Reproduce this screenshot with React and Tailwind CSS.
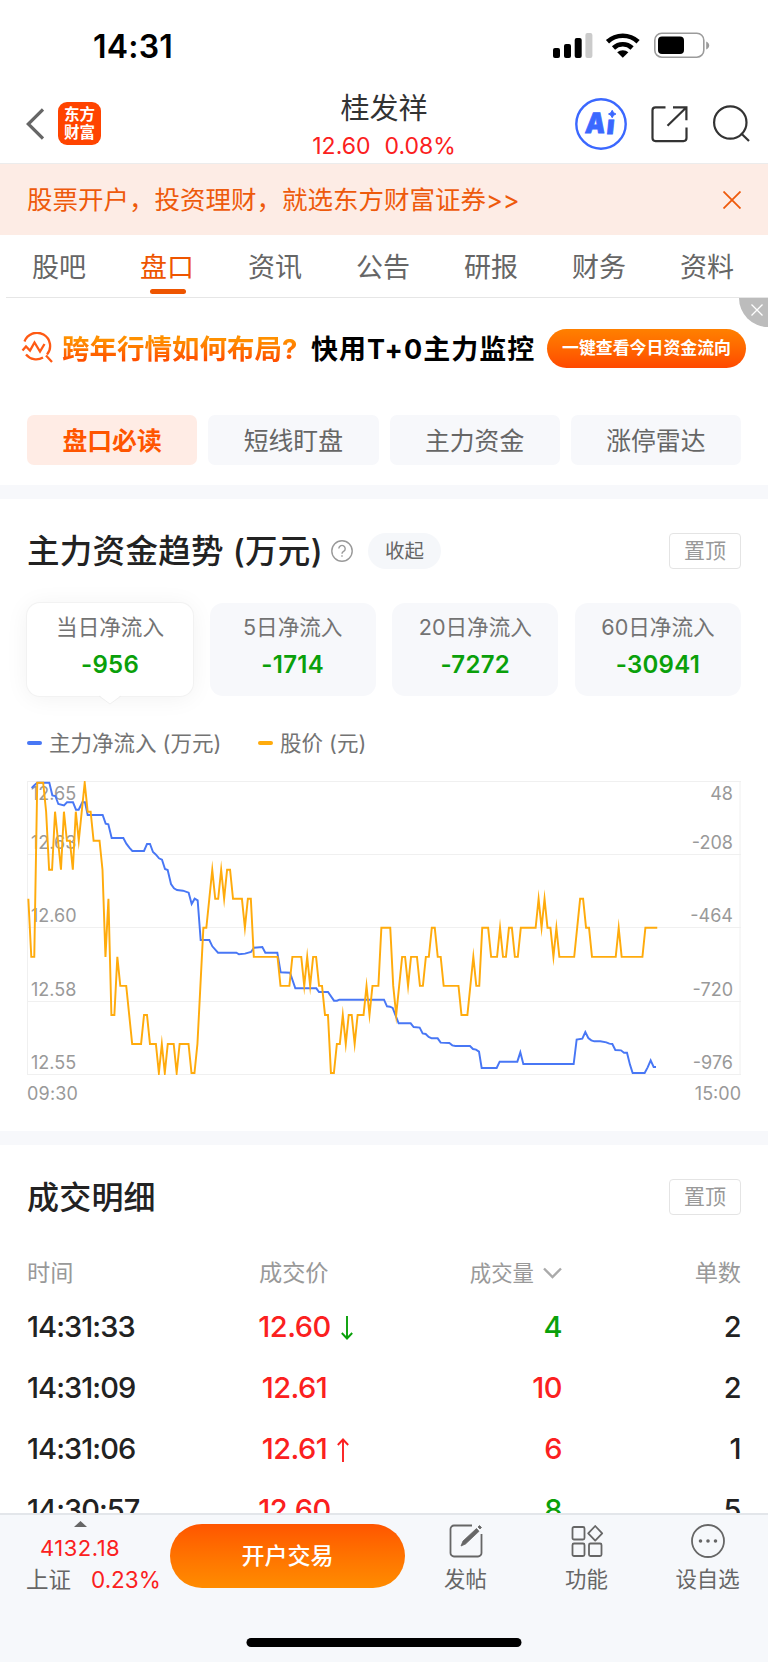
import React from 'react';

const tabs = ['股吧', '盘口', '资讯', '公告', '研报', '财务', '资料'];
const subTabs = ['盘口必读', '短线盯盘', '主力资金', '涨停雷达'];

const flows = [
    { label: '当日净流入', value: '-956', active: true },
    { label: '5日净流入', value: '-1714' },
    { label: '20日净流入', value: '-7272' },
    { label: '60日净流入', value: '-30941' },
];

const trades = [
    { time: '14:31:33', price: '12.60', dir: 'down', volume: '4', buy: false, count: '2' },
    { time: '14:31:09', price: '12.61', dir: null, volume: '10', buy: true, count: '2' },
    { time: '14:31:06', price: '12.61', dir: 'up', volume: '6', buy: true, count: '1' },
    { time: '14:30:57', price: '12.60', dir: null, volume: '8', buy: false, count: '5' },
];

// Price per minute as "cents x minutes", 12.55 - 12.65
const priceRuns =
    '61 59x2 65x3 64 62x2 64 63 62 64 63x2 62 64 63 64 65 64x2 63x3 62 59 61 57x2 59 58x3 57 56x4 57x2 56x3 55 56 55 56x3 55 56x4 55x2 56 58 60x2 61 62 61x2 62 61 62x2 61x4 60 61x2 59x9 58x4 59x4 58 59 58 59x2 58x2 57x2 55x2 56x2 57 56 57x2 56 57x3 58 57 58x3 60x4 58 57 58 59x2 58 59x3 58x2 59x2 60x2 59x2 58x6 57x3 58 59 58x2 60x3 59x3 60 59x2 60x2 59x2 60x6 61 60 61 60x2 59 60 59x6 60 61x2 60x2 59x9 60 59x8 60x5';

const pricePoints = priceRuns
    .split(' ')
    .flatMap((run) => {
        const [cents, n] = run.split('x');
        return Array(Number(n || 1)).fill(Number(cents));
    })
    .map((cents, i) => `${(85 + i * 8.9).toFixed(1)},${(38 + (65 - cents) * 87.1).toFixed(1)}`)
    .join(' ');

const flowPoints =
    '95,54 104,45 112,38 148,38 157,76 166,78 175,102 192,106 201,97 219,97 228,119 236,119 247,97 255,97 263,135 308,135 317,161 325,163 335,204 370,204 379,221 388,233 397,243 432,243 441,222 450,222 459,246 468,254 477,265 486,269 495,297 503,300 513,342 522,355 531,360 549,362 566,368 575,402 584,386 593,391 602,510 628,510 637,529 654,548 709,548 717,553 735,551 753,546 762,533 787,531 796,548 832,548 842,607 870,608 886,655 949,655 957,666 984,666 1002,692 1011,692 1018,689 1152,689 1161,709 1170,710 1178,714 1196,760 1232,760 1241,771 1259,773 1268,790 1277,792 1286,801 1295,805 1313,805 1322,818 1348,819 1357,826 1366,828 1410,828 1419,837 1428,839 1437,845 1445,894 1490,894 1499,875 1552,875 1561,847 1570,882 1721,882 1730,809 1747,806 1756,786 1765,804 1774,811 1783,814 1801,814 1819,817 1828,821 1837,822 1846,840 1863,841 1872,848 1881,848 1890,884 1898,909 1934,909 1943,892 1952,871 1961,891 1968,891';

const gridLines = [11.5, 84.5, 157.5, 231.5, 304.5];
const leftAxis = [['12.65', 30], ['12.63', 78.5], ['12.60', 152], ['12.58', 225.5], ['12.55', 299]];
const rightAxis = [['48', 30], ['-208', 78.5], ['-464', 152], ['-720', 225.5], ['-976', 299]];

function StatusBar() {
    return (
        <div className="flex h-[76px] shrink-0 items-start justify-between pl-[93px] pr-[58px] text-black">
            <span className="mt-[27px] text-[32px] font-semibold leading-[40px] tracking-[0.2px]">14:31</span>
            <svg className="mt-[30px]" width="158" height="32" viewBox="552 30 158 32">
                <rect x="553" y="48" width="7" height="10" rx="2" />
                <rect x="564" y="44" width="7" height="14" rx="2" />
                <rect x="574.7" y="38" width="7" height="20" rx="2" />
                <rect x="585.4" y="33" width="7" height="25" rx="2" fill="#cbcbcb" />
                <g fill="none" stroke="#000" strokeWidth="4.6">
                    <path d="M607.5 41.8a22.5 22.5 0 0 1 30.6 0" />
                    <path d="M613.5 48a13.6 13.6 0 0 1 18.6 0" />
                </g>
                <path d="M617.2 52.3a8.4 8.4 0 0 1 11.2 0l-5.6 5.4z" />
                <rect x="654.8" y="33.2" width="49" height="24" rx="7" fill="none" stroke="#9b9b9b" strokeWidth="1.6" />
                <rect x="658" y="36.6" width="26" height="17.4" rx="4" />
                <path d="M706.2 41.5c4 1.500 4 6.500 0 8z" fill="#9b9b9b" />
            </svg>
        </div>
    );
}

function Header() {
    return (
        <header className="flex h-[88px] shrink-0 items-start justify-between border-b border-[#ececec] pl-[25px] pr-[17px]">
            <div className="flex w-[217px] items-center gap-[14px] pt-[26px]">
                <svg width="19" height="32" viewBox="0 0 19 32" fill="none" stroke="#666" strokeWidth="3.200">
                    <path d="M18 1.500 3.300 16 18 30.500" />
                </svg>
                <div className="flex h-[43px] w-[43px] flex-col items-center justify-center rounded-[9px] bg-[#ff4400] text-[15.500px] font-bold leading-[17.500px] text-white">
                    <span>东方</span>
                    <span>财富</span>
                </div>
            </div>
            <div className="flex flex-col items-center pt-[14px]">
                <span className="text-[29px] leading-[38px] text-[#333]">桂发祥</span>
                <div className="flex gap-[14px] text-[23px] leading-[36px] text-[#fb2020]">
                    <span>12.60</span>
                    <span>0.08%</span>
                </div>
            </div>
            <div className="flex w-[225px] justify-end pt-[20px]">
                <svg width="176" height="56" viewBox="575 96 176 56" fill="none" stroke="#333" strokeWidth="2.200">
                    <circle cx="601" cy="124" r="24.700" stroke="#3b68ff" strokeWidth="2.400" />
                    <g fontWeight="900" fill="#3b68ff" stroke="#3b68ff" strokeWidth="0.800">
                        <text transform="translate(584.500 133) skewX(-6) scale(0.9 1)" fontSize="28">A</text>
                        <text transform="translate(606 133.500) skewX(-6)" fontSize="26">ı</text>
                    </g>
                    <path d="M612.200 110.300 Q613 113.200 615.900 114 Q613 114.800 612.200 117.700 Q611.400 114.800 608.500 114 Q611.400 113.200 612.200 110.300z" fill="#3b68ff" stroke="#3b68ff" strokeWidth="1" />
                    <path d="M665.500 107.300h-10a3 3 0 0 0-3 3v27.800a3 3 0 0 0 3 3h28a3 3 0 0 0 3-3v-10.500M673 107.300h13.400v13M686 107.700 667.500 125.800" />
                    <circle cx="730.300" cy="122.500" r="16.200" />
                    <path d="M741 133.300 749 141" />
                </svg>
            </div>
        </header>
    );
}

function PromoBanner() {
    return (
        <div className="flex h-[71px] shrink-0 items-center justify-between bg-[#fdece5] pl-[27px] pr-[27px] text-[#ee5a0c]">
            <span className="text-[25.500px] leading-[36px]">股票开户，投资理财，就选东方财富证券&gt;&gt;</span>
            <svg width="18" height="18" viewBox="0 0 18 18" stroke="currentColor" strokeWidth="1.800">
                <path d="M.5.5l17 17M17.500.5l-17 17" />
            </svg>
        </div>
    );
}

function TabBar() {
    return (
        <nav className="ml-[6px] flex h-[63px] shrink-0 border-b border-[#e6e6e6] pr-[6px]">
            {tabs.map((tab) => {
                const isActive = tab === '盘口';
                return (
                    <div key={tab} className={`relative flex-1 pr-[2px] pt-[14px] text-center text-[27px] leading-[38px] ${isActive ? 'text-[#ee5500]' : 'text-[#666]'}`}>
                        {tab}
                        {isActive && <span className="absolute bottom-[3px] left-1/2 h-[5px] w-[36px] -translate-x-1/2 rounded-full bg-[#ee5500]" />}
                    </div>
                );
            })}
        </nav>
    );
}

function AdStrip() {
    return (
        <div className="relative flex h-[117px] shrink-0 items-start pl-[21px] pt-[31px]">
            <svg className="mt-[3px]" width="32" height="32" viewBox="0 0 32 32" fill="none" stroke="#ff5a14" strokeWidth="2.300">
                <path d="M3.500 9.500A13.200 13.200 0 1 1 26 22.500M5 22.500a13.200 13.200 0 0 0 17 3M25 23.500l6 6.500" />
                <path d="M1.500 18.500 5 14.500l4 4 4.500-8 5.500 9 4.500-7.500" />
            </svg>
            <span className="ml-[9px] mt-px w-[249px] whitespace-nowrap bg-gradient-to-b from-[#ff9000] from-25% to-[#ff5000] to-75% bg-clip-text text-[27.500px] font-bold leading-[39px] text-transparent">
                跨年行情如何布局?
            </span>
            <span className="mt-px w-[225px] whitespace-nowrap text-[27px] font-bold leading-[39px] tracking-[1px] text-black">快用T+0主力监控</span>
            <span className="ml-[11px] h-[39px] w-[199px] rounded-full bg-gradient-to-b from-[#ff8000] to-[#ff4800] text-center text-[16.900px] font-bold leading-[39px] text-white">
                一键查看今日资金流向
            </span>
            <div className="absolute right-0 top-0 flex h-[29px] w-[29px] items-center justify-center rounded-bl-full bg-[#bcbcbc] pb-[6px] pl-[7px]">
                <svg width="12" height="12" viewBox="0 0 12 12" stroke="#fff" strokeWidth="1.300">
                    <path d="M.5.5l11 11M11.500.5l-11 11" />
                </svg>
            </div>
        </div>
    );
}

function PinButton() {
    return <button className="h-[36px] w-[72px] rounded-[4px] border border-[#e4e4e4] text-[21px] leading-[34px] text-[#999]">置顶</button>;
}

function FlowChart() {
    return (
        <svg className="shrink-0" width="768" height="361" viewBox="0 0 768 361">
            <clipPath id="plot">
                <rect x="27" y="11" width="714" height="294" />
            </clipPath>
            <g stroke="#f0f0f0" strokeWidth="1">
                {gridLines.map((y) => (
                    <path key={y} d={`M27 ${y}H741`} />
                ))}
                <path d="M27.500 11V305M740 11V305" />
            </g>
            <g fontSize="18" fill="#999">
                {leftAxis.map(([text, y]) => (
                    <text key={text} x="31" y={y}>{text}</text>
                ))}
                {rightAxis.map(([text, y]) => (
                    <text key={text} x="733" y={y} textAnchor="end">{text}</text>
                ))}
                <text x="27" y="329.500" letterSpacing="0.200">09:30</text>
                <text x="741" y="329.500" textAnchor="end">15:00</text>
            </g>
            <g clipPath="url(#plot)">
                <g transform="scale(0.33333)" fill="none" strokeWidth="5.800" strokeMiterlimit="10">
                    <polyline points={flowPoints} stroke="#4877f5" />
                    <polyline points={pricePoints} stroke="#ffab0c" />
                </g>
            </g>
        </svg>
    );
}

function FundTrend() {
    return (
        <section className="flex shrink-0 flex-col">
            <div className="flex items-center px-[27px] pt-[34px]">
                <h2 className="whitespace-nowrap pt-[2px] text-[32.500px] font-medium leading-[34px] tracking-[0.300px] text-[#222]">主力资金趋势 (万元)</h2>
                <svg className="ml-[8px]" width="22" height="22" viewBox="0 0 22 22" fill="none" stroke="#999" strokeWidth="1.400">
                    <circle cx="11" cy="11" r="10.200" />
                    <path d="M7.800 8.600a3.200 3.200 0 1 1 4.800 2.800c-1.100.7-1.600 1.200-1.600 2.400M11 15.200v1.600" />
                </svg>
                <span className="ml-[15px] h-[36px] w-[73px] rounded-full bg-[#f5f7fa] text-center text-[19.500px] leading-[36px] text-[#666]">收起</span>
                <div className="ml-auto">
                    <PinButton />
                </div>
            </div>
            <div className="mt-[34px] grid grid-cols-4 gap-[16.500px] px-[27px]">
                {flows.map((item) => (
                    <div
                        key={item.label}
                        className={`relative flex h-[93px] flex-col items-center rounded-[13px] pt-[8px] ${item.active ? 'bg-white shadow-[0_0_0_1px_#f2f2f2,0_2px_24px_rgba(0,0,0,0.06)]' : 'bg-[#f7f8fb]'}`}
                    >
                        <span className="text-[21.600px] leading-[32px] text-[#737373]">{item.label}</span>
                        <span className="mt-[7px] text-[24px] font-semibold leading-[30px] tracking-[0.300px] text-[#0aa00a]">{item.value}</span>
                        {item.active && (
                            <svg className="absolute -bottom-[9px] left-1/2 -translate-x-1/2" width="22" height="11" viewBox="0 0 22 11">
                                <path d="M0 0h22v1L11 10 0 1z" fill="#fff" />
                                <path d="M0 2l11 8 11-8" fill="none" stroke="#ececec" strokeWidth="0.800" />
                            </svg>
                        )}
                    </div>
                ))}
            </div>
            <div className="flex h-[74px] items-center px-[27px] pt-[20px] text-[21.500px] leading-[32px] text-[#737373]">
                <span className="mr-[7px] h-[4px] w-[15px] rounded-full bg-[#4877f5]" />
                <span className="w-[209px]">主力净流入 (万元)</span>
                <span className="mr-[7px] h-[4px] w-[15px] rounded-full bg-[#ffab0c]" />
                <span>股价 (元)</span>
            </div>
            <FlowChart />
        </section>
    );
}

function TradeArrow({ dir }) {
    return (
        <svg className="absolute left-full top-[8px] ml-[10px]" width="12" height="26" viewBox="0 0 12 26" fill="none" stroke={dir === 'up' ? '#fb2020' : '#0aa00a'} strokeWidth="1.900">
            {dir === 'up' ? <path d="M6 25V2.500M.8 8 6 2.500 11.200 8" /> : <path d="M6 1v22.500M.8 18 6 23.500 11.200 18" />}
        </svg>
    );
}

function TradeDetails() {
    return (
        <section className="shrink-0 px-[27px]">
            <div className="flex items-center justify-between pt-[34px]">
                <h2 className="pt-[2px] text-[32px] font-medium leading-[34px] tracking-[0.200px] text-[#222]">成交明细</h2>
                <PinButton />
            </div>
            <div className="mt-[42px] flex h-[32px] items-center text-[23.200px] leading-[32px] text-[#999]">
                <span className="w-[232px]">时间</span>
                <span className="w-[71px] whitespace-nowrap">成交价</span>
                <span className="flex w-[232px] items-center justify-end text-[21.400px]">
                    成交量
                    <svg className="ml-[9px]" width="19" height="12" viewBox="0 0 19 12" fill="none" stroke="#aaa" strokeWidth="2.400">
                        <path d="M1 1.500l8.500 8.500L18 1.500" />
                    </svg>
                </span>
                <span className="flex-1 text-right">单数</span>
            </div>
            <div className="pt-[7px]">
                {trades.map((row) => (
                    <div key={row.time} className="flex h-[61px] items-center text-[29px] font-medium leading-[40px] tracking-[-0.500px] text-[#222]">
                        <span className="w-[232px] tracking-[-0.950px]">{row.time}</span>
                        <span className="flex w-[71px] justify-center text-[#fb2020]">
                            <span className="relative">
                                {row.price}
                                {row.dir && <TradeArrow dir={row.dir} />}
                            </span>
                        </span>
                        <span className={`w-[232px] text-right ${row.buy ? 'text-[#fb2020]' : 'text-[#0aa00a]'}`}>{row.volume}</span>
                        <span className="flex-1 text-right">{row.count}</span>
                    </div>
                ))}
            </div>
        </section>
    );
}

const actions = [
    {
        label: '发帖',
        icon: (
            <>
                <path d="M23 1.500H5a3.500 3.500 0 0 0-3.500 3.500v24A3.500 3.500 0 0 0 5 32.500h24a3.500 3.500 0 0 0 3.500-3.500V10" />
                <path d="M12 22l2-5L27.500 4.500l2.500 2.800L16.500 20zM29 3l1.500-1.500 2 2L31 5z" fill="currentColor" strokeWidth="0.800" />
            </>
        ),
    },
    {
        label: '功能',
        icon: (
            <>
                <rect x="2.500" y="3" width="12" height="12.500" rx="1.500" />
                <rect x="2.500" y="19.500" width="12" height="12.500" rx="1.500" />
                <rect x="19" y="19.500" width="12.500" height="12.500" rx="1.500" />
                <path d="M25.200 2l7 7.300-7 7.300-7-7.300z" strokeLinejoin="round" />
            </>
        ),
    },
    {
        label: '设自选',
        icon: (
            <>
                <circle cx="17" cy="17" r="16" />
                <path d="M9.500 17h.01M17 17h.01M24.500 17h.01" strokeWidth="3.600" strokeLinecap="round" />
            </>
        ),
    },
];

function BottomBar() {
    return (
        <footer className="relative flex h-[149px] shrink-0 items-start border-t-2 border-[#e3e6ea] bg-[#f6f8fb]">
            <div className="relative w-[170px] pt-[19px]">
                <svg className="absolute left-[74px] top-[6px]" width="13" height="6" viewBox="0 0 13 6">
                    <path d="M6.500 0 13 6H0z" fill="#666" />
                </svg>
                <div className="pl-[40px] text-[22px] leading-[28px] tracking-[0.500px] text-[#fb2020]">4132.18</div>
                <div className="flex gap-[20px] pl-[26px] pt-[4px] text-[22.500px] leading-[28px]">
                    <span className="text-[#666]">上证</span>
                    <span className="text-[#fb2020]">0.23%</span>
                </div>
            </div>
            <button className="mt-[9px] h-[64px] w-[235px] rounded-full bg-gradient-to-b from-[#ff5500] to-[#ff8c00] text-[23px] font-medium leading-[62px] text-white">
                开户交易
            </button>
            {actions.map((item) => (
                <div key={item.label} className="flex flex-1 flex-col items-center pt-[9px] text-[#666]">
                    <svg width="34" height="34" viewBox="0 0 34 34" fill="none" stroke="currentColor" strokeWidth="1.800">
                        {item.icon}
                    </svg>
                    <span className="mt-[5px] text-[21.400px] leading-[32px]">{item.label}</span>
                </div>
            ))}
            {/* Home indicator */}
            <div className="absolute bottom-[15px] left-1/2 h-[9px] w-[275px] -translate-x-1/2 rounded-full bg-black" />
        </footer>
    );
}

export default function App() {
    return (
        <div className="flex h-[1662px] w-[768px] flex-col overflow-hidden bg-white font-['Inter','Noto_Sans_CJK_SC',sans-serif]">
            <StatusBar />
            <Header />
            <PromoBanner />
            <TabBar />
            <main className="flex min-h-0 flex-1 flex-col overflow-hidden">
                <AdStrip />
                <div className="grid shrink-0 grid-cols-4 gap-[11px] px-[27px] pb-[20px]">
                    {subTabs.map((tab, i) => (
                        <div
                            key={tab}
                            className={`h-[50px] rounded-[7px] text-center text-[24.800px] leading-[52px] ${i === 0 ? 'bg-[#ffece5] font-bold text-[#ff5500]' : 'bg-[#f7f8fb] text-[#666]'}`}
                        >
                            {tab}
                        </div>
                    ))}
                </div>
                <div className="h-[14px] shrink-0 bg-[#f7f8fb]" />
                <FundTrend />
                <div className="h-[14px] shrink-0 bg-[#f7f8fb]" />
                <TradeDetails />
            </main>
            <BottomBar />
        </div>
    );
}
